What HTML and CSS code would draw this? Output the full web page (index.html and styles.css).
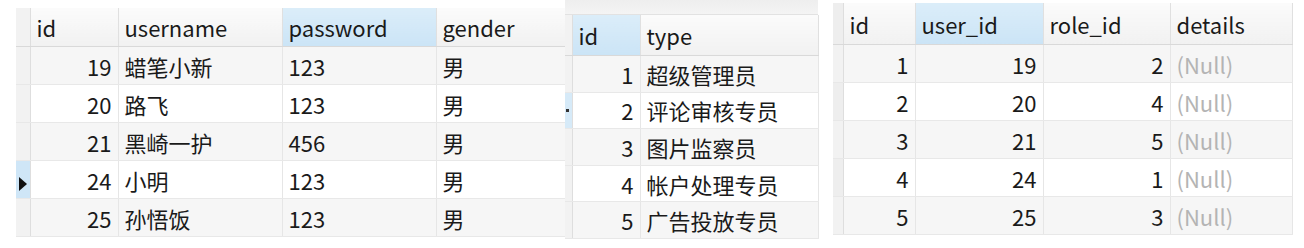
FILE: index.html
```html
<!DOCTYPE html>
<html lang="zh">
<head>
<meta charset="utf-8">
<link rel="stylesheet" href="styles.css">
</head>
<body>
<div class="page">
  <div class="panel p-users">
    <table class="grid">
      <colgroup><col class="g"><col style="width:88px"><col style="width:164px"><col style="width:154px"><col style="width:129px"></colgroup>
      <thead><tr><th class="gut"></th><th>id</th><th>username</th><th class="hl">password</th><th>gender</th></tr></thead>
      <tbody>
        <tr class="odd"><td class="gut"></td><td class="num">19</td><td>蜡笔小新</td><td>123</td><td>男</td></tr>
        <tr><td class="gut"></td><td class="num">20</td><td>路飞</td><td>123</td><td>男</td></tr>
        <tr class="odd"><td class="gut"></td><td class="num">21</td><td>黑崎一护</td><td>456</td><td>男</td></tr>
        <tr><td class="gut sel"><span class="tri"></span></td><td class="num">24</td><td>小明</td><td>123</td><td>男</td></tr>
        <tr class="odd"><td class="gut"></td><td class="num">25</td><td>孙悟饭</td><td>123</td><td>男</td></tr>
      </tbody>
    </table>
  </div>
  <div class="panel p-roles">
    <div class="strip"></div>
    <table class="grid">
      <colgroup><col class="g2"><col style="width:68px"><col style="width:178px"></colgroup>
      <thead><tr><th class="gut"></th><th class="hl">id</th><th>type</th></tr></thead>
      <tbody>
        <tr class="odd"><td class="gut"></td><td class="num">1</td><td>超级管理员</td></tr>
        <tr><td class="gut sel2"><span class="dot"></span></td><td class="num">2</td><td>评论审核专员</td></tr>
        <tr class="odd"><td class="gut"></td><td class="num">3</td><td>图片监察员</td></tr>
        <tr><td class="gut"></td><td class="num">4</td><td>帐户处理专员</td></tr>
        <tr class="odd"><td class="gut"></td><td class="num">5</td><td>广告投放专员</td></tr>
      </tbody>
    </table>
  </div>
  <div class="panel p-links">
    <table class="grid">
      <colgroup><col class="g3"><col style="width:72px"><col style="width:128px"><col style="width:127px"><col style="width:122px"></colgroup>
      <thead><tr><th class="gut"></th><th>id</th><th class="hl">user_id</th><th>role_id</th><th>details</th></tr></thead>
      <tbody>
        <tr class="odd"><td class="gut"></td><td class="num">1</td><td class="num">19</td><td class="num">2</td><td class="null">(Null)</td></tr>
        <tr><td class="gut"></td><td class="num">2</td><td class="num">20</td><td class="num">4</td><td class="null">(Null)</td></tr>
        <tr class="odd"><td class="gut"></td><td class="num">3</td><td class="num">21</td><td class="num">5</td><td class="null">(Null)</td></tr>
        <tr><td class="gut"></td><td class="num">4</td><td class="num">24</td><td class="num">1</td><td class="null">(Null)</td></tr>
        <tr class="odd"><td class="gut"></td><td class="num">5</td><td class="num">25</td><td class="num">3</td><td class="null">(Null)</td></tr>
      </tbody>
    </table>
  </div>
</div>
</body>
</html>
```
FILE: styles.css
```css
html, body {
  margin: 0;
  padding: 0;
  background: #ffffff;
}
.page {
  display: flex;
  align-items: flex-start;
  width: 1304px;
  height: 248px;
  overflow: hidden;
  font-family: "Noto Sans CJK SC", "Noto Sans", sans-serif;
  font-size: 22px;
  color: #1a1a1a;
}
.panel { flex: none; }
.p-users { margin-left: 16px; margin-top: 8px; width: 549px; }
.p-roles { width: 253px; margin-right: 15px; }
.p-links { width: 459px; margin-top: 3px; }

.grid {
  border-collapse: collapse;
  table-layout: fixed;
  width: 100%;
}
.grid col.g { width: 14px; }
.grid col.g2 { width: 7px; }
.grid col.g3 { width: 10px; }

.grid th, .grid td {
  padding: 0 6px;
  white-space: nowrap;
  overflow: hidden;
  text-align: left;
  font-weight: normal;
  line-height: 1;
  border-right: 1px solid #e6e6e6;
  border-bottom: 1px solid #e8e8e8;
}
.grid th {
  background: linear-gradient(#fbfbfb, #f1f1f1);
  border-bottom: 1px solid #d9d9d9;
  border-right: 1px solid #e0e0e0;
}
.grid th.hl {
  background: linear-gradient(#dbedf9, #cbe4f6);
}
.p-users th { height: 38px; }
.p-users td { height: 37px; }
.p-roles th { height: 40px; }
.p-roles td { height: 35.6px; }
.p-links th { height: 41px; }
.p-links td { height: 37px; }

.grid tr.odd td { background: #f6f6f6; }
.grid tr td { background: #ffffff; }
.grid tr.odd td.gut, .grid td.gut, .grid th.gut {
  background: #f2f2f2;
  padding: 0;
  border-right: 1px solid #dedede;
}
.grid td.num { text-align: right; }
.grid td.null { color: #b4b4b4; }
.grid td.gut.sel { background: #cfe6f7; text-align: center; }
.grid td.gut.sel2 { background: #d6eaf8; }
.tri {
  display: inline-block;
  width: 0; height: 0;
  border-top: 7px solid transparent;
  border-bottom: 7px solid transparent;
  border-left: 8px solid #111;
  vertical-align: middle;
}
.dot {
  display: block;
  width: 3px; height: 3px;
  margin-left: 1px;
  background: #333;
}
.strip {
  height: 14px;
  background: linear-gradient(#eeeeee, #f4f4f4);
  border-bottom: 1px solid #e2e2e2;
}
.p-links td.gut, .p-links th.gut { background: #eeeeee; }
```
